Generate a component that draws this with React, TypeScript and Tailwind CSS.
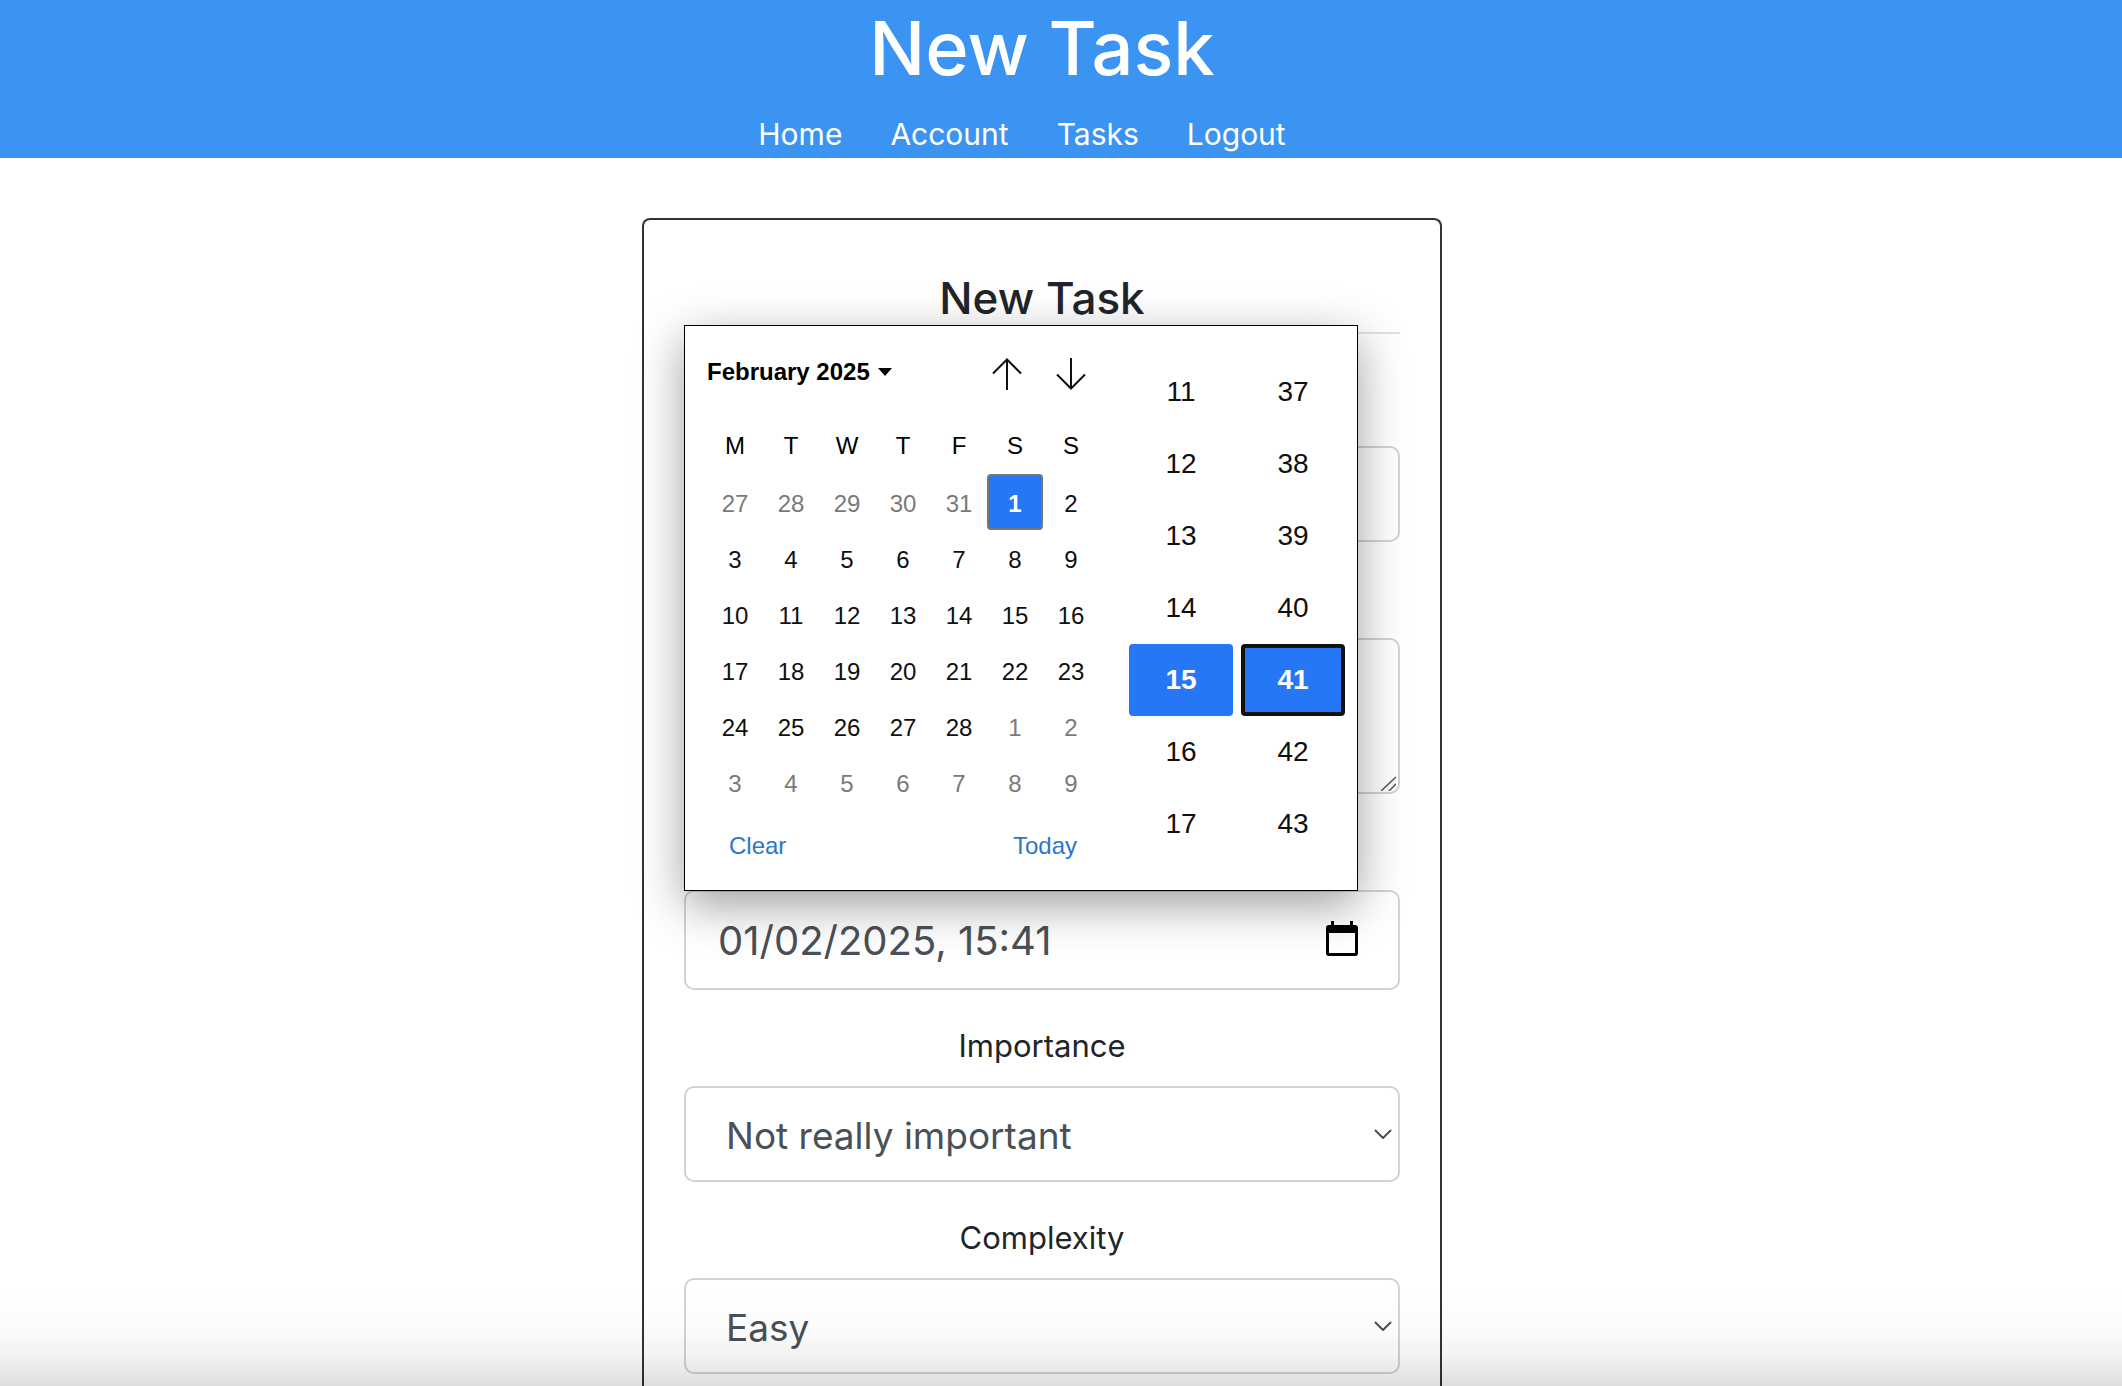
import { useState } from "react";

const links = ["Home", "Account", "Tasks", "Logout"];
const weekdays = ["M", "T", "W", "T", "F", "S", "S"];
const weeks = [
  [27, 28, 29, 30, 31, 1, 2],
  [3, 4, 5, 6, 7, 8, 9],
  [10, 11, 12, 13, 14, 15, 16],
  [17, 18, 19, 20, 21, 22, 23],
  [24, 25, 26, 27, 28, 1, 2],
  [3, 4, 5, 6, 7, 8, 9],
];
const hours = [11, 12, 13, 14, 15, 16, 17];
const minutes = [37, 38, 39, 40, 41, 42, 43];

const control =
  "block w-full appearance-none rounded-[10px] border-2 border-[#ced4da] bg-white text-[#495057] outline-none";

function Header() {
  return (
    <header className="bg-[#3b94f1] pr-[38px] text-center text-white">
      <h1 className="h-24 text-[74px] leading-24 font-medium">New Task</h1>
      <nav className="pt-[14px]">
        <ul className="flex justify-center gap-2">
          {links.map((l) => (
            <li key={l} className="mr-10">
              <a href="#" className="block text-[30px] leading-12">{l}</a>
            </li>
          ))}
        </ul>
      </nav>
    </header>
  );
}

function isOutside(week: number, day: number) {
  return (week === 0 && day > 20) || (week > 3 && day < 20);
}

function Calendar() {
  return (
    <div className="w-[420px] pt-2 pl-[22px]">
      <div className="flex h-21 items-center pb-1">
        <button type="button" className="flex flex-1 items-center gap-2 pb-1 text-2xl font-bold">
          February 2025
          <svg width="14" height="8" viewBox="0 0 14 8" aria-hidden="true">
            <path d="M0 0h14L7 8z" />
          </svg>
        </button>
        <button type="button" aria-label="Previous month" className="flex w-16 justify-center">
          <svg width="32" height="32" viewBox="0 0 32 32" fill="none" stroke="#101010" strokeWidth="2" aria-hidden="true">
            <path d="M16 32V1M2 15.500L16 1.500l14 14" />
          </svg>
        </button>
        <button type="button" aria-label="Next month" className="mr-[2px] flex w-16 justify-center">
          <svg width="32" height="32" viewBox="0 0 32 32" fill="none" stroke="#101010" strokeWidth="2" aria-hidden="true">
            <path d="M16 0v31M2 16.500l14 14 14-14" />
          </svg>
        </button>
      </div>
      <table className="w-[392px] table-fixed text-center text-2xl">
        <thead>
          <tr className="h-14">
            {weekdays.map((d, i) => (
              <th key={i} scope="col" className="p-0 font-normal">{d}</th>
            ))}
          </tr>
        </thead>
        <tbody>
          {weeks.map((week, w) => (
            <tr key={w} className="h-14">
              {week.map((day, i) => (
                <td key={i} className="p-0">
                  <button
                    type="button"
                    className={
                      w === 0 && day === 1
                        ? "block h-14 w-full rounded border-2 border-[#767676] bg-[#2577f6] pt-1 font-bold text-white"
                        : isOutside(w, day)
                          ? "block h-14 w-full pt-1 text-[#7a7a7a]"
                          : "block h-14 w-full pt-1 text-[#101010]"
                    }
                  >
                    {day}
                  </button>
                </td>
              ))}
            </tr>
          ))}
        </tbody>
      </table>
      <div className="flex justify-between pt-5 pr-7 pl-[22px] text-2xl text-[#2a76d0]">
        <button type="button">Clear</button>
        <button type="button">Today</button>
      </div>
    </div>
  );
}

function TimeColumn({ values, selected, focused }: { values: number[]; selected: number; focused?: boolean }) {
  return (
    <ul className="w-26 text-[28px] text-[#101010]">
      {values.map((v) => (
        <li key={v}>
          <button
            type="button"
            className={
              v !== selected
                ? "h-18 w-full"
                : focused
                  ? "h-18 w-full rounded border-4 border-[#101010] bg-[#2577f6] font-bold text-white"
                  : "h-18 w-full rounded bg-[#2577f6] font-bold text-white"
            }
          >
            {v}
          </button>
        </li>
      ))}
    </ul>
  );
}

function Picker() {
  return (
    <div
      role="dialog"
      aria-label="Choose date and time"
      className="absolute bottom-full left-0 z-10 -mb-px flex h-[566px] w-[674px] border border-black bg-white font-['Liberation_Sans',sans-serif] text-black shadow-[0_14px_44px_rgba(0,0,0,0.38)]"
    >
      <Calendar />
      <div className="flex gap-2 pt-[30px] pl-6">
        <TimeColumn values={hours} selected={15} />
        <TimeColumn values={minutes} selected={41} focused />
      </div>
    </div>
  );
}

function SelectField({ id, label, options }: { id: string; label: string; options: string[] }) {
  return (
    <div>
      <label htmlFor={id} className="mb-4 block text-[31px] leading-12">{label}</label>
      <div className="relative">
        <select id={id} className={`${control} h-24 pt-1 pl-10 text-[37px]`}>
          {options.map((o) => (
            <option key={o}>{o}</option>
          ))}
        </select>
        <svg className="pointer-events-none absolute top-[43px] right-2" width="18" height="11" viewBox="0 0 18 11" fill="none" stroke="#495057" strokeWidth="2" strokeLinecap="round" strokeLinejoin="round" aria-hidden="true">
          <path d="M1.500 1.500L9 9l7.500-7.500" />
        </svg>
      </div>
    </div>
  );
}

export default function App() {
  const [due, setDue] = useState("01/02/2025, 15:41");
  return (
    <div className="flex min-h-screen flex-col bg-white font-[Inter,sans-serif] text-[#212529]">
      <Header />
      <main className="flex flex-1 flex-col items-center pt-15 pr-[38px]">
        <form className="w-full max-w-[800px] flex-1 rounded-t-lg border-2 border-b-0 border-[#333] px-10 pt-12 text-center">
          <h2 className="border-b-2 border-[#dee2e6] pb-1 text-[44px] leading-15 font-medium">New Task</h2>
          <div className="flex flex-col gap-8 pt-12">
            <div className="pt-16">
              <input aria-label="Title" type="text" className={`${control} h-24 px-8 text-[37px]`} />
            </div>
            <div className="relative pt-16">
              <textarea aria-label="Description" className={`${control} h-39 resize-none px-8 text-[37px]`} />
              <svg className="pointer-events-none absolute right-1 bottom-[3px]" width="15" height="15" viewBox="0 0 15 15" stroke="#555" strokeWidth="1.5" aria-hidden="true">
                <path d="M0 15L15 1M8 15l7-7" />
              </svg>
            </div>
            <div className="pt-16">
              <div className="relative">
                <input aria-label="Due date" type="text" value={due} onChange={(e) => setDue(e.target.value)} className={`${control} h-25 px-8 text-[40px]`} />
                <button type="button" aria-label="Open date picker" className="absolute top-[31px] right-[42px]">
                  <svg width="32" height="36" viewBox="0 0 32 36" aria-hidden="true">
                    <path fillRule="evenodd" d="M5 0h3v4h16V0h3v4h2a3 3 0 0 1 3 3v25a3 3 0 0 1-3 3H3a3 3 0 0 1-3-3V7a3 3 0 0 1 3-3h2zM3 12v20h26V12z" />
                  </svg>
                </button>
                <Picker />
              </div>
            </div>
            <SelectField id="importance" label="Importance" options={["Not really important", "Important", "Very important"]} />
            <SelectField id="complexity" label="Complexity" options={["Easy", "Medium", "Hard"]} />
          </div>
        </form>
      </main>
      <div className="pointer-events-none fixed inset-x-0 bottom-0 h-25 bg-[linear-gradient(to_bottom,rgba(0,0,0,0),rgba(0,0,0,0.01)_40%,rgba(0,0,0,0.05)_70%,rgba(0,0,0,0.13))]" />
    </div>
  );
}
